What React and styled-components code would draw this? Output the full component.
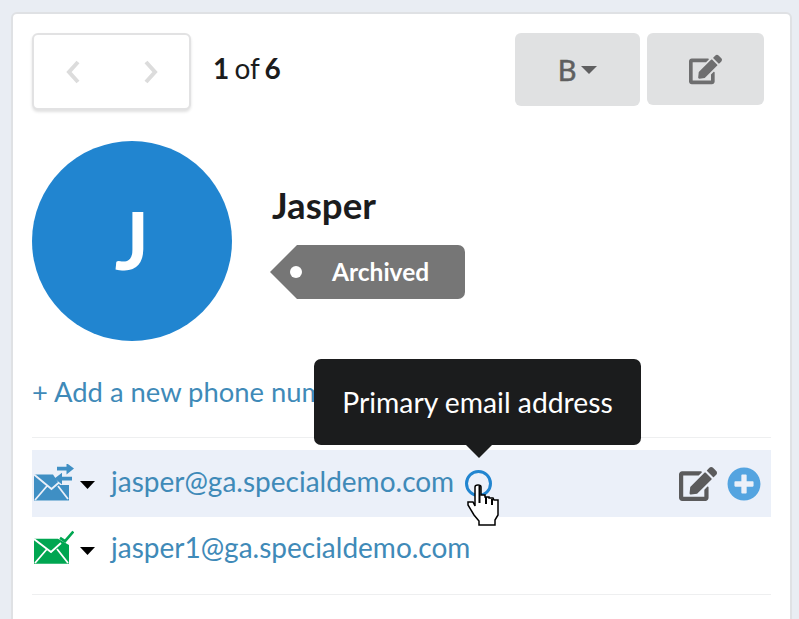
import React from 'react'
import styled, { createGlobalStyle } from 'styled-components'
import { FaEdit, FaPlusCircle } from 'react-icons/fa'

const Global = createGlobalStyle`
  html, body {
    margin: 0;
    height: 619px;
    overflow: hidden;
    background: #e9edf3;
    font-family: Lato, "Open Sans", sans-serif;
    color: #1b1c1d;
  }
`
const Page = styled.div`
  height: 619px;
  overflow: hidden;
  padding: 12px 7px 0 11px;
`
const Card = styled.div`
  position: relative;
  height: 640px;
  box-sizing: border-box;
  background: #fff;
  border: 2px solid #dfe1e4;
  border-radius: 6px;
  padding: 19px 19px 0 19px;
`
const Toolbar = styled.div`
  display: flex;
  align-items: flex-start;
`
const Pager = styled.div`
  width: 159px;
  height: 77px;
  box-sizing: border-box;
  display: flex;
  align-items: center;
  justify-content: space-between;
  padding: 0 30px 0 31px;
  border: 2px solid #e2e2e3;
  border-radius: 6px;
  box-shadow: 0 2px 3px rgba(0, 0, 0, 0.12);
  background: #fff;
`
const Count = styled.div`
  margin: 17px 0 0 22px;
  font-size: 28px;
  line-height: 36px;
  word-spacing: -2px;
  b { font-weight: 700; }
`
const Actions = styled.div`
  margin-left: auto;
  margin-right: 7px;
  display: flex;
  gap: 7px;
`
const GreyButton = styled.div`
  width: ${({ $w }) => $w}px;
  height: ${({ $h }) => $h}px;
  display: flex;
  align-items: center;
  justify-content: center;
  gap: 5px;
  background: #e0e1e2;
  border-radius: 6px;
  color: #5f5f60;
  font-size: 29px;
  -webkit-text-stroke: 0.5px #5f5f60;
`
const Caret = styled.span`
  width: 0;
  height: 0;
  border-left: ${({ $s }) => $s}px solid transparent;
  border-right: ${({ $s }) => $s}px solid transparent;
  border-top: ${({ $s }) => $s}px solid ${({ $c }) => $c};
`
const Profile = styled.div`
  display: flex;
  margin-top: 31px;
`
const Avatar = styled.div`
  width: 200px;
  height: 200px;
  box-sizing: border-box;
  padding-bottom: 4px;
  border-radius: 50%;
  background: #2185d0;
  color: #fff;
  font-size: 80px;
  font-weight: 700;
  display: flex;
  align-items: center;
  justify-content: center;
`
const Info = styled.div`
  margin-left: 38px;
  display: flex;
  flex-direction: column;
  align-items: flex-start;
`
const Name = styled.div`
  margin: 42px 0 0 2px;
  font-size: 36.7px;
  font-weight: 700;
  line-height: 45px;
`
const Tag = styled.div`
  position: relative;
  margin-top: 17px;
  width: 168px;
  height: 54px;
  margin-left: 27px;
  box-sizing: border-box;
  padding-left: 35px;
  background: #767676;
  color: #fff;
  border-radius: 0 7px 7px 0;
  font-size: 24.5px;
  font-weight: 700;
  line-height: 54px;
  &::before {
    content: '';
    position: absolute;
    left: -27px;
    top: 0;
    width: 27px;
    height: 54px;
    background: #767676;
    clip-path: polygon(100% 0, 100% 100%, 0 50%);
  }
  &::after {
    content: '';
    position: absolute;
    left: -7px;
    top: 21px;
    width: 12px;
    height: 12px;
    border-radius: 50%;
    background: #fff;
  }
`
const AddLink = styled.div`
  margin-top: 32px;
  font-size: 27.4px;
  line-height: 38px;
  color: #3f8ab8;
`
const Rule = styled.div`
  height: 1px;
  margin-top: ${({ $mt }) => $mt}px;
  background: #eeeff0;
`
const EmailRow = styled.div`
  display: flex;
  align-items: center;
  height: ${({ $h }) => $h}px;
  margin-top: ${({ $mt }) => $mt || 0}px;
  background: ${({ $active }) => ($active ? '#ebf0f9' : 'transparent')};
  font-size: 28px;
  color: #3f8ab8;
`
const MailSlot = styled.div`
  width: 46px;
  display: flex;
  margin-left: 2px;
`
const RowCaret = styled.span`
  width: 15px;
  height: 8px;
  margin-top: 3px;
  background: #000;
  clip-path: polygon(0 0, 100% 0, 50% 100%);
`
const EmailText = styled.span`
  margin: 0 0 5px 16px;
`
const Ring = styled.span`
  width: 27px;
  height: 27px;
  box-sizing: border-box;
  margin-left: 11px;
  border: 3px solid #2185d0;
  border-radius: 50%;
`
const RowTools = styled.div`
  margin-left: auto;
  margin-right: 10px;
  display: flex;
  align-items: center;
  gap: 10px;
`
const Tooltip = styled.div`
  position: absolute;
  left: 301px;
  top: 345px;
  width: 327px;
  height: 86px;
  box-sizing: border-box;
  background: #1b1c1d;
  color: #fff;
  border-radius: 7px;
  font-size: 28.3px;
  line-height: 86px;
  text-align: center;
  &::after {
    content: '';
    position: absolute;
    left: 152px;
    bottom: -13px;
    width: 26px;
    height: 13px;
    background: #1b1c1d;
    clip-path: polygon(0 0, 100% 0, 50% 100%);
  }
`
const HandCursor = styled.svg`
  position: absolute;
  left: 455px;
  top: 471px;
  overflow: visible;
`

const Chevron = ({ left }) => (
  <svg width="16" height="24" viewBox="0 0 16 24">
    <path
      d={left ? 'M13 2 L4 12 L13 22' : 'M3 2 L12 12 L3 22'}
      fill="none"
      stroke="#dcdcdc"
      strokeWidth="4"
    />
  </svg>
)

const MailBlue = () => (
  <svg width="40" height="40" viewBox="0 0 40 40">
    <path d="M0 10.5 H19 L26 21 H35 V36.5 H0 Z" fill="#3f8fc4" />
    <path
      d="M0 10.5 L17.5 25 L29 15 M1 36 L13 22 M34 35 L24 22"
      fill="none"
      stroke="#ebf0f9"
      strokeWidth="1.8"
    />
    <path d="M23 2.8 H32.5 V-1 L40 4.5 L32.5 10.5 V6.4 H23 Z" fill="#3f8fc4" />
    <path d="M38 12.8 H28 V8.8 L20.5 14.5 L28 20.5 V16.4 H38 Z" fill="#3f8fc4" />
  </svg>
)

const MailGreen = () => (
  <svg width="40" height="40" viewBox="0 0 40 40">
    <path d="M0 8.8 H24 L35 15 V33.8 H0 Z" fill="#00a651" />
    <path
      d="M0 9 L17 22 L27 13 M1 33 L13 19 M34 33 L23 19"
      fill="none"
      stroke="#fff"
      strokeWidth="1.8"
    />
    <path d="M26 7.8 L31 11.2 L39.3 1.5" fill="none" stroke="#00a651" strokeWidth="2.6" />
  </svg>
)

const App = () => {
  return (
    <Page>
      <Global />
      <Card>
        <Toolbar>
          <Pager>
            <Chevron left />
            <Chevron />
          </Pager>
          <Count>
            <b>1</b> of <b>6</b>
          </Count>
          <Actions>
            <GreyButton $w={125} $h={73}>
              B <Caret $s={8} $c="#5f5f60" />
            </GreyButton>
            <GreyButton $w={117} $h={72}>
              <FaEdit size={33} color="#6e6e6f" />
            </GreyButton>
          </Actions>
        </Toolbar>
        <Profile>
          <Avatar>J</Avatar>
          <Info>
            <Name>Jasper</Name>
            <Tag>Archived</Tag>
          </Info>
        </Profile>
        <AddLink>+ Add a new phone number</AddLink>
        <Rule $mt={26} />
        <EmailRow $active $h={67} $mt={12}>
          <MailSlot>
            <MailBlue />
          </MailSlot>
          <RowCaret />
          <EmailText>jasper@ga.specialdemo.com</EmailText>
          <Ring />
          <RowTools>
            <FaEdit size={38} color="#5b5b5c" />
            <FaPlusCircle size={34} color="#54a4e0" />
          </RowTools>
        </EmailRow>
        <EmailRow $h={65}>
          <MailSlot>
            <MailGreen />
          </MailSlot>
          <RowCaret />
          <EmailText>jasper1@ga.specialdemo.com</EmailText>
        </EmailRow>
        <Rule $mt={12} />
        <Tooltip>Primary email address</Tooltip>
        <HandCursor width="30" height="40" viewBox="0 0 30 40">
          <path
            d="M7 2 Q7 0 10 0 Q13 0 13 2 V10 H17 V12 H21 V13 H25 L26 15 H30 V30 L27 35 V40 H11 V36 L6 30 L0 20 V17 H5 L7 21 Z"
            fill="#fff"
            stroke="#000"
            strokeWidth="1.5"
          />
          <path d="M11.5 1 V18 M18 12 V19 M24 14 V20" stroke="#000" strokeWidth="2" fill="none" />
        </HandCursor>
      </Card>
    </Page>
  )
}

export default App
